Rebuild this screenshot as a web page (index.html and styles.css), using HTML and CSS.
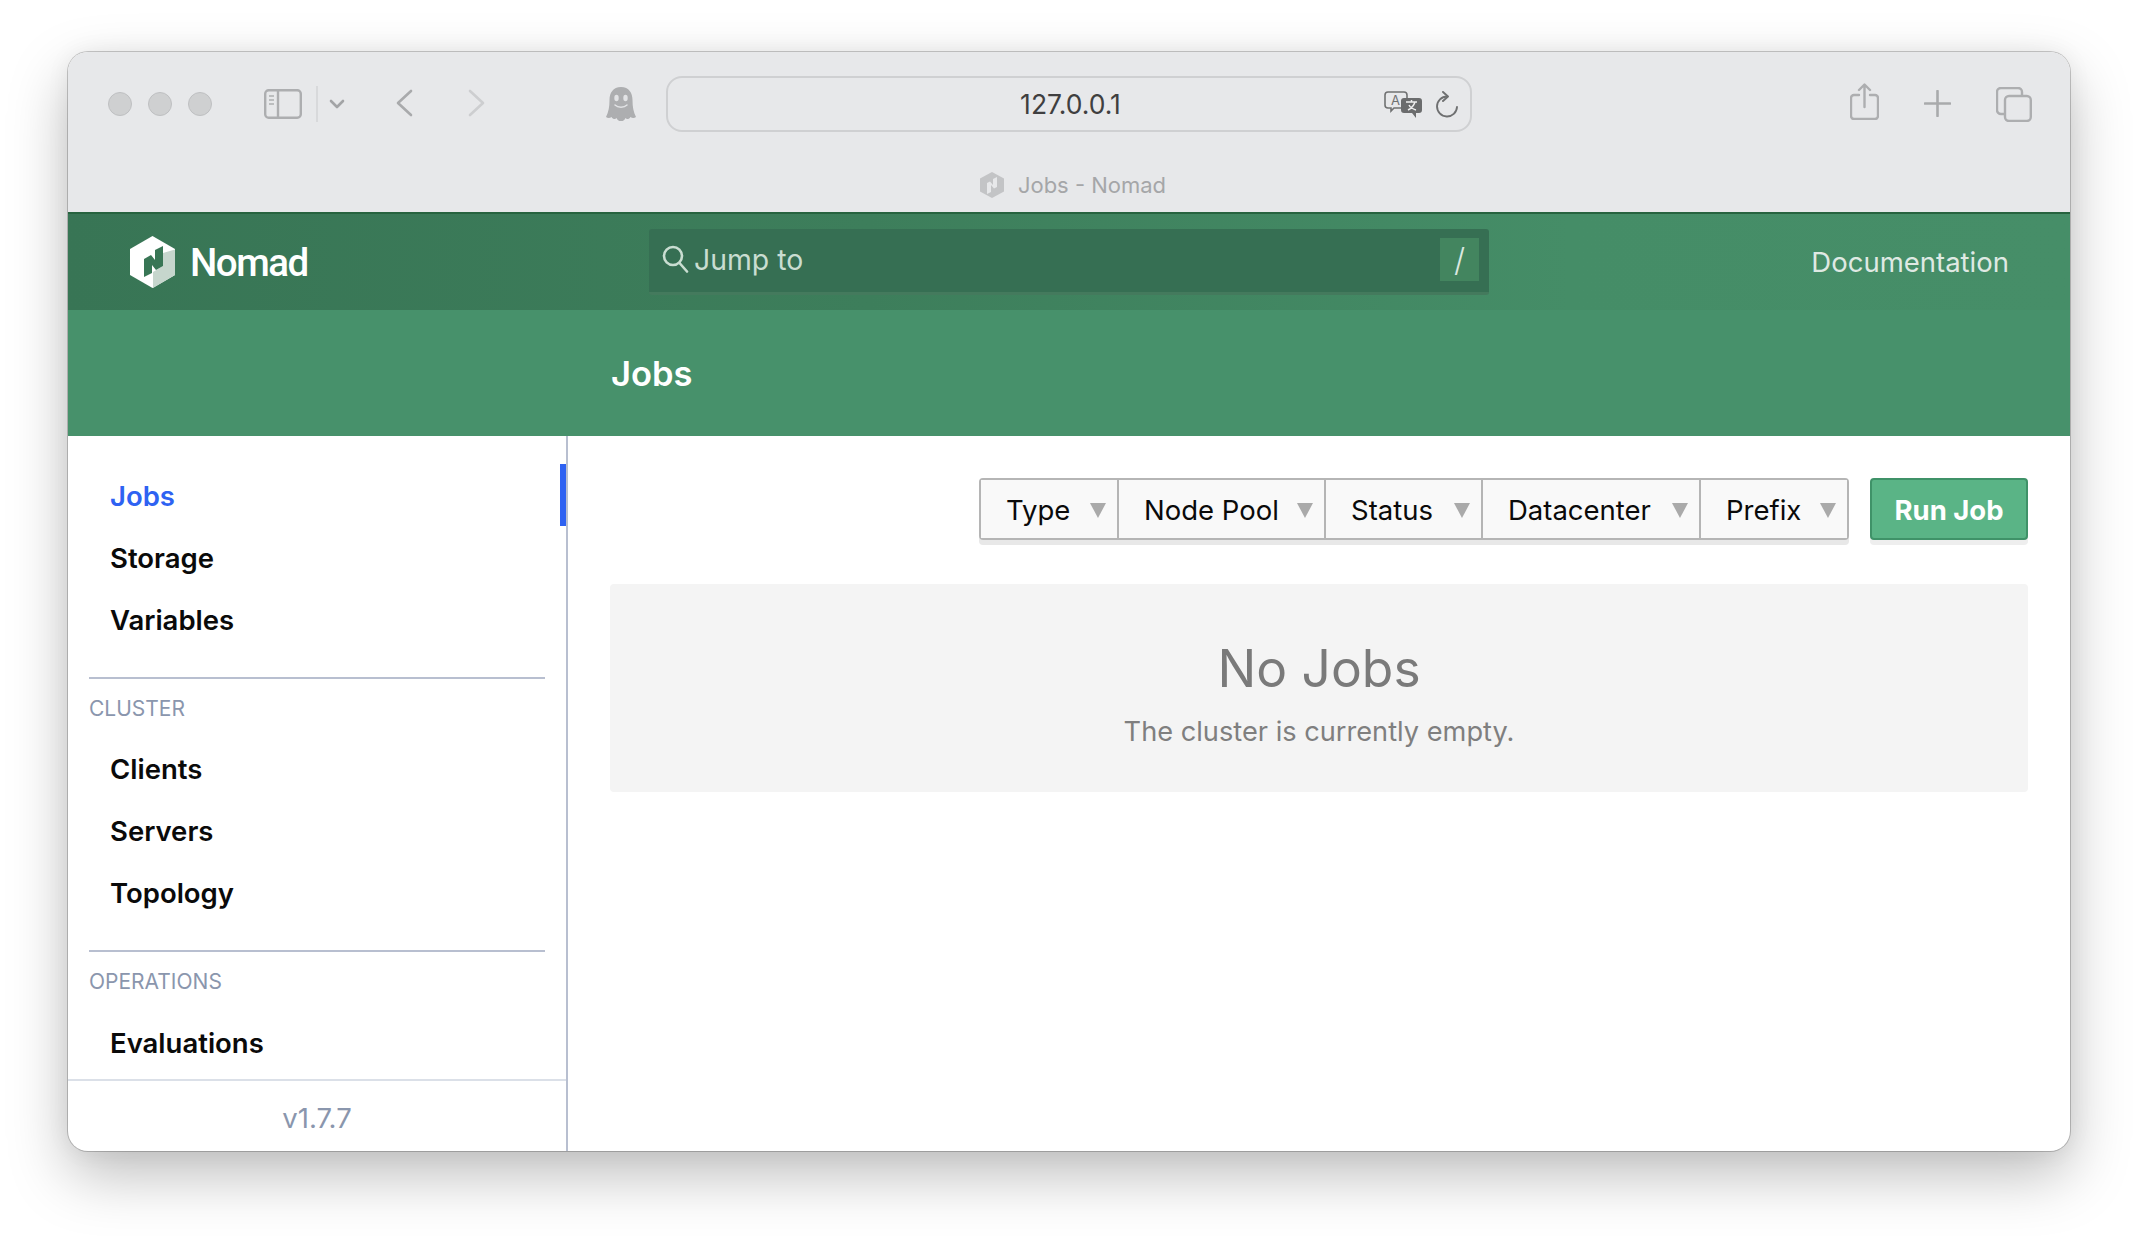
FILE: index.html
```html
<!doctype html>
<html>
    <head>
        <meta charset="utf-8">
        <title>Jobs - Nomad</title>
        <link rel="stylesheet" href="styles.css">
    </head>
    <body>
        <div class="window">
            <div class="chrome">
                <div class="toolbar">
                    <div class="lights"><i></i><i></i><i></i></div>
                    <svg class="ic-sidebar" viewBox="0 0 38 30" fill="none" stroke="#adaeb0" stroke-width="2.4">
                        <rect x="1.2" y="1.2" width="35.6" height="27.6" rx="3.5"/>
                        <path d="M14 1.2v27.6"/>
                        <path d="M5 7h5M5 11h5M5 15h5" stroke-width="1.6"/>
                    </svg>
                    <span class="tool-sep"></span>
                    <svg class="ic-chev" viewBox="0 0 16 10" fill="none" stroke="#a3a4a6" stroke-width="2.6" stroke-linecap="round" stroke-linejoin="round"><path d="M2 2l6 6 6-6"/></svg>
                    <svg class="ic-back" viewBox="0 0 17 28" fill="none" stroke="#a9aaac" stroke-width="2.6" stroke-linecap="round" stroke-linejoin="round"><path d="M15 2L2 14l13 12"/></svg>
                    <svg class="ic-forward" viewBox="0 0 17 28" fill="none" stroke="#cdced0" stroke-width="2.6" stroke-linecap="round" stroke-linejoin="round"><path d="M2 2l13 12L2 26"/></svg>
                    <svg class="ic-ghost" viewBox="0 0 30 34">
                        <path fill="#adaeb0" d="M15 0C7 0 3.500 6 3.500 13c0 7-1 12-3.500 17 2 1.500 4 1 5.500 0 1.500 2.500 4 2.500 5 1 1 2.500 3 3.500 4.500 3 1.500.5 3.500-.5 4.500-3 1 1.500 3.500 1.500 5-1 1.500 1 3.500 1.500 5.500 0-2.500-5-3.500-10-3.500-17C26.500 6 23 0 15 0z"/>
                        <ellipse cx="10.500" cy="11" rx="2.200" ry="3.200" fill="#e2e3e5"/>
                        <ellipse cx="19.500" cy="11" rx="2.200" ry="3.200" fill="#e2e3e5"/>
                        <path d="M9 18c3 3 9 3 12 0" fill="none" stroke="#e2e3e5" stroke-width="1.500" stroke-linecap="round"/>
                    </svg>
                    <div class="address">
                        <span class="address-text">127.0.0.1</span>
                        <svg class="ic-translate" viewBox="0 0 38 27">
                            <path d="M4 1h16a3 3 0 0 1 3 3v10a3 3 0 0 1-3 3H10l-3 3v-3H4a3 3 0 0 1-3-3V4a3 3 0 0 1 3-3z" fill="#e7e8ea" stroke="#707172" stroke-width="1.6"/>
                            <text x="7" y="14" class="tr-a">A</text>
                            <path d="M20 7h15a3 3 0 0 1 3 3v9a3 3 0 0 1-3 3h-3v5l-4-5h-8a3 3 0 0 1-3-3v-9a3 3 0 0 1 3-3z" fill="#6b6c6d"/>
                            <path d="M22 11h11M27.500 9v2M24 19c4-2 6-5 7-8M25 14c1 2 4 4 7 5" fill="none" stroke="#eee" stroke-width="1.5"/>
                        </svg>
                        <svg class="ic-reload" viewBox="0 0 24 27" fill="none" stroke="#6f7071" stroke-width="1.9" stroke-linecap="round" stroke-linejoin="round">
                            <path d="M12 5.500a10 10 0 1 0 10 10.500"/>
                            <path d="M8 1l5 4.500-5 4.500"/>
                        </svg>
                    </div>
                    <div class="tool-right">
                        <svg class="ic-share" viewBox="0 0 29 37" fill="none" stroke="#adaeb0" stroke-width="2.4" stroke-linecap="round" stroke-linejoin="round">
                            <path d="M9 12H4a3 3 0 0 0-3 3v18a3 3 0 0 0 3 3h21a3 3 0 0 0 3-3V15a3 3 0 0 0-3-3h-5"/>
                            <path d="M14.500 24V2M9 7l5.500-5.500L20 7"/>
                        </svg>
                        <svg class="ic-plus" viewBox="0 0 27 27" fill="none" stroke="#a9aaac" stroke-width="2.6" stroke-linecap="round"><path d="M13.500 1v25M1 13.500h25"/></svg>
                        <svg class="ic-tabs" viewBox="0 0 36 35" fill="none" stroke="#adaeb0" stroke-width="2.4">
                            <path d="M8 27H5a4 4 0 0 1-4-4V5a4 4 0 0 1 4-4h17a4 4 0 0 1 4 4v3"/>
                            <rect x="9" y="9" width="25.800" height="25" rx="4"/>
                        </svg>
                    </div>
                </div>
                <div class="tab-title">
                    <svg class="ic-favicon" viewBox="0 0 24 26">
                        <path fill="#c3c4c6" d="M12 0l12 6.500v13L12 26 0 19.500v-13z"/>
                        <path fill="#e7e8ea" d="M7 11l3-1.500 3 3.500V7l4-2v10l-3 1.500-3-3.500v7l-4 2z"/>
                    </svg>
                    <span>Jobs - Nomad</span>
                </div>
            </div>
            <nav class="navbar">
                <a class="brand">
                    <svg class="logo" viewBox="0 0 45 52">
                        <path fill="#fff" d="M22.500 0L45 13v26L22.500 52 0 39V13z"/>
                        <path fill="#c6d6cd" d="M45 13.500V39L23 52V36l10-6V17z"/>
                        <path fill="#387655" d="M14 23l7-4 4 5V14l8-4v20l-7 4-4-5v8l-8 4z"/>
                    </svg>
                    <span class="brand-name">Nomad</span>
                </a>
                <div class="search">
                    <svg class="ic-search" viewBox="0 0 27 28" fill="none" stroke="#c9ddd1" stroke-width="2.6" stroke-linecap="round"><circle cx="11" cy="11" r="9"/><path d="M17.500 18l7.500 8.500"/></svg>
                    <span class="search-text">Jump to</span>
                    <span class="slash">/</span>
                </div>
                <a class="doc-link">Documentation</a>
            </nav>
            <div class="subnav"><h1>Jobs</h1></div>
            <div class="page">
                <aside class="sidebar">
                    <div class="menu">
                        <ul class="menu-list">
                            <li class="active">Jobs</li>
                            <li>Storage</li>
                            <li>Variables</li>
                        </ul>
                        <div class="menu-label">Cluster</div>
                        <ul class="menu-list">
                            <li>Clients</li>
                            <li>Servers</li>
                            <li>Topology</li>
                        </ul>
                        <div class="menu-label">Operations</div>
                        <ul class="menu-list">
                            <li>Evaluations</li>
                        </ul>
                    </div>
                    <div class="version">v1.7.7</div>
                </aside>
                <main class="content">
                    <div class="toolbar-row">
                        <div class="filters">
                            <button class="filter f-type">Type</button>
                            <button class="filter f-pool">Node Pool</button>
                            <button class="filter f-status">Status</button>
                            <button class="filter f-dc">Datacenter</button>
                            <button class="filter f-prefix">Prefix</button>
                        </div>
                        <button class="run-job">Run Job</button>
                    </div>
                    <div class="empty">
                        <h2>No Jobs</h2>
                        <p>The cluster is currently empty.</p>
                    </div>
                </main>
            </div>
        </div>
    </body>
</html>
```

FILE: styles.css
```css
* {
    box-sizing: border-box;
}

html, body {
    height: 100%;
}

body {
    margin: 0;
    padding: 52px 68px 0;
    overflow: hidden;
    background: #fff;
    font-family: "Inter", "Liberation Sans", sans-serif;
}

.window {
    display: flex;
    flex-direction: column;
    height: 1099px;
    border-radius: 20px;
    overflow: hidden;
    background: #fff;
    box-shadow: 0 0 0 1px rgba(0,0,0,.2), 0 24px 60px rgba(0,0,0,.26), 0 0 24px rgba(0,0,0,.06);
}

/* browser chrome */
.chrome {
    height: 160px;
    flex: none;
    background: #e7e8ea;
}

.toolbar {
    display: flex;
    align-items: center;
    height: 104px;
    padding: 0 38px 0 40px;
}

.lights {
    display: flex;
    gap: 16px;
    margin-right: 52px;
}

.lights i {
    display: block;
    width: 24px;
    height: 24px;
    border-radius: 50%;
    background: #cfd0d1;
    border: 1px solid #bfc0c2;
}

.ic-sidebar { width: 38px; height: 30px; }
.tool-sep { width: 2px; height: 36px; margin: 0 11px 0 14px; background: #d8d9db; }
.ic-chev { width: 16px; height: 10px; }
.ic-back { width: 17px; height: 28px; margin: 0 0 2px 51px; }
.ic-forward { width: 17px; height: 28px; margin: 0 0 2px 55px; }
.ic-ghost { width: 30px; height: 34px; margin-left: 121px; }

.address {
    position: relative;
    display: flex;
    align-items: center;
    justify-content: flex-end;
    width: 806px;
    height: 56px;
    margin-left: 30px;
    padding-right: 11px;
    border: 2px solid #cfd0d2;
    border-radius: 16px;
}

.address-text {
    position: absolute;
    left: 3px;
    right: 0;
    text-align: center;
    font-size: 26.5px;
    color: #3f3f40;
}

.ic-translate { position: relative; width: 38px; height: 27px; margin-right: 13px; }
.tr-a { font-size: 13px; fill: #707172; font-family: "Inter", sans-serif; }
.ic-reload { position: relative; width: 24px; height: 27px; }

.tool-right {
    display: flex;
    align-items: center;
    margin-left: auto;
}

.ic-share { width: 29px; height: 37px; margin-bottom: 5px; }
.ic-plus { width: 27px; height: 27px; margin: 0 0 2px 45px; }
.ic-tabs { width: 36px; height: 35px; margin-left: 45px; }

.tab-title {
    display: flex;
    align-items: center;
    justify-content: center;
    gap: 14px;
    height: 52px;
    padding: 5px 0 0 8px;
    font-size: 22px;
    color: #a5a6a8;
}

.ic-favicon { width: 24px; height: 26px; }

/* nomad header */
.navbar {
    display: flex;
    align-items: center;
    height: 98px;
    flex: none;
    padding: 0 61px 0 62px;
    border-top: 2px solid #27633f;
    background: linear-gradient(90deg, #387555 0%, #3d7e5b 40%, #458d67 75%, #468e68 100%);
}

.brand {
    display: flex;
    align-items: center;
    gap: 15px;
    width: 519px;
}

.logo { width: 45px; height: 52px; }

.brand-name {
    font-family: "Roboto", sans-serif;
    font-weight: 500;
    font-size: 38.5px;
    letter-spacing: -1.5px;
    color: #fff;
}

.search {
    display: flex;
    align-items: center;
    width: 840px;
    height: 66px;
    padding: 0 10px 3px 13px;
    background: #366f53;
    border-radius: 3px;
    border-bottom: 3px solid #447a5d;
}

.ic-search { width: 27px; height: 28px; margin-right: 5px; }

.search-text {
    flex: 1;
    font-size: 28.4px;
    color: #c9ddd1;
}

.slash {
    width: 39px;
    height: 43px;
    line-height: 43px;
    text-align: center;
    font-size: 32px;
    font-weight: 300;
    color: #dbe8e0;
    background: #43855f;
}

.doc-link {
    margin-left: auto;
    font-size: 27.5px;
    color: #dfe9e3;
}

.subnav {
    display: flex;
    align-items: center;
    height: 126px;
    flex: none;
    padding-left: 543px;
    background: #47916b;
}

.subnav h1 {
    margin: 0;
    font-size: 34.5px;
    font-weight: 600;
    color: #fff;
}

/* page */
.page {
    display: flex;
    flex: 1;
    min-height: 0;
}

.sidebar {
    display: flex;
    flex-direction: column;
    width: 500px;
    flex: none;
    border-right: 2px solid #b8bfd0;
}

.menu {
    flex: 1;
    min-height: 0;
    padding-top: 29px;
    overflow: hidden;
}

.menu-list {
    margin: 0;
    padding: 0;
    list-style: none;
}

.menu-list li {
    position: relative;
    height: 62px;
    line-height: 62px;
    padding-left: 42px;
    font-size: 27.5px;
    font-weight: 600;
    color: #0a0a0a;
}

.menu-list .active {
    color: #2e62f2;
}

.menu-list .active::after {
    content: "";
    position: absolute;
    top: -1px;
    right: 0;
    width: 6px;
    height: 62px;
    background: #2e62f2;
}

.menu-label {
    margin: 26px 21px 0;
    padding-top: 18px;
    height: 61px;
    border-top: 2px solid #b8bfd0;
    font-size: 21px;
    line-height: 24px;
    text-transform: uppercase;
    color: #8a96ad;
}

.menu-label + .menu-list ~ .menu-label {
    height: 62px;
}

.version {
    height: 72px;
    flex: none;
    line-height: 75px;
    text-align: center;
    font-size: 27.5px;
    color: #8a96ad;
    border-top: 2px solid #dbe0e8;
}

.content {
    flex: 1;
    min-width: 0;
    padding: 42px 42px 0;
}

.toolbar-row {
    display: flex;
    justify-content: flex-end;
    gap: 21px;
}

.filters {
    display: flex;
    height: 62px;
    border: 2px solid #b5b5b5;
    border-radius: 4px;
    box-shadow: 0 5px 0 #e8e8e8;
}

.filter {
    position: relative;
    height: 58px;
    margin: 0;
    padding: 2px 0 0 25px;
    border: none;
    border-right: 2px solid #b5b5b5;
    background: #f9f9f9;
    text-align: left;
    font-family: "Inter", sans-serif;
    font-size: 27.5px;
    color: #0a0a0a;
}

.filter:last-child {
    border-right: none;
}

.filter::after {
    content: "";
    position: absolute;
    top: 23px;
    right: 11px;
    border-left: 8px solid transparent;
    border-right: 8px solid transparent;
    border-top: 15px solid #aaa;
}

.f-type { width: 138px; }
.f-pool { width: 207px; }
.f-status { width: 157px; }
.f-dc { width: 218px; }
.f-prefix { width: 146px; }

.run-job {
    width: 158px;
    height: 62px;
    padding-top: 2px;
    border: 2px solid #3f9268;
    border-radius: 4px;
    background: #5ab486;
    box-shadow: 0 5px 0 #eee;
    font-family: "Inter", sans-serif;
    font-size: 27.5px;
    font-weight: 700;
    color: #fff;
}

.empty {
    height: 208px;
    margin-top: 44px;
    padding-top: 51px;
    text-align: center;
    background: #f4f4f4;
    border-radius: 4px;
}

.empty h2 {
    margin: 0;
    font-size: 51.5px;
    line-height: 66px;
    font-weight: 400;
    color: #7a7a7a;
}

.empty p {
    margin: 13px 0 0;
    font-size: 27.2px;
    line-height: 36px;
    color: #7f7f7f;
}
```
